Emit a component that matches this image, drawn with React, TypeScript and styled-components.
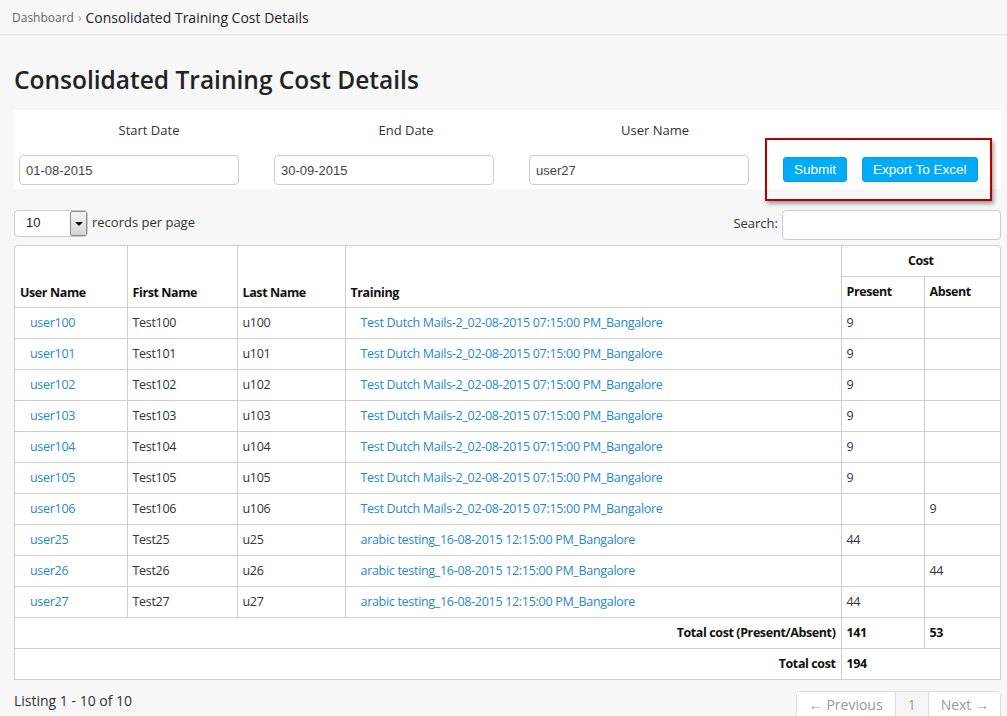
import React from "react";
import styled, { createGlobalStyle } from "styled-components";

const GlobalStyle = createGlobalStyle`
  html, body { margin: 0; padding: 0; }
  body {
    background: #f7f7f7;
    font-family: "Open Sans", "Liberation Sans", sans-serif;
    color: #333;
    font-size: 13px;
  }
  * { box-sizing: border-box; }
`;

const Crumbs = styled.div`
  height: 35px;
  display: flex;
  align-items: center;
  padding-left: 12px;
  border-bottom: 1px solid #e6e6e6;
  gap: 4px;
`;
const CrumbLink = styled.span`
  font-size: 12px;
  color: #666;
`;
const CrumbSep = styled.span`
  font-size: 12px;
  color: #999;
`;
const CrumbCurrent = styled.span`
  font-size: 14px;
  color: #222;
`;

const Main = styled.div`
  padding: 0 6px 0 14px;
`;

const Title = styled.h1`
  margin: 27px 0 12px;
  font-size: 24.5px;
  line-height: 36px;
  font-weight: 600;
  color: #222;
`;

const Panel = styled.div`
  background: #fff;
  height: 79px;
  display: flex;
  align-items: flex-end;
  padding: 0 0 4px 5px;
`;
const Field = styled.div`
  width: 255px;
  display: flex;
  flex-direction: column;
`;
const FieldLabel = styled.div<{ $shift: number }>`
  width: 220px;
  text-align: center;
  padding-left: ${(p) => p.$shift}px;
  font-size: 13px;
  line-height: 18px;
  color: #333;
  margin-bottom: 16px;
`;
const TextInput = styled.input`
  width: 220px;
  height: 30px;
  border: 1px solid #ccc;
  border-radius: 4px;
  padding: 0 6px;
  font-family: "Liberation Sans", Arial, sans-serif;
  font-size: 13px;
  color: #444;
  background: #fff;
  outline: none;
`;
const ActionCell = styled.div`
  position: relative;
  margin-left: -18px;
  display: flex;
  gap: 15px;
  padding: 0 0 3px 17px;
`;
const Highlight = styled.div`
  position: absolute;
  left: -1px;
  top: -19px;
  width: 227px;
  height: 63px;
  border: 2px solid #b50000;
  box-shadow: 2px 3px 4px rgba(0, 0, 0, 0.35);
  pointer-events: none;
`;
const Btn = styled.button`
  height: 25px;
  padding: 0 10px;
  border: 1px solid #00a0e6;
  border-radius: 3px;
  background: #02abf5;
  color: #fff;
  font-family: "Liberation Sans", Arial, sans-serif;
  font-size: 13.5px;
  line-height: 23px;
`;

const Toolbar = styled.div`
  margin-top: 21px;
  display: flex;
  justify-content: space-between;
  align-items: flex-start;
  height: 30px;
  margin-bottom: 5px;
`;
const Length = styled.div`
  display: flex;
  align-items: center;
  gap: 4px;
  font-size: 13px;
  line-height: 18px;
  color: #333;
`;
const LengthText = styled.span`
  margin-bottom: 3px;
`;
const SelectBox = styled.div`
  width: 74px;
  height: 27px;
  border: 1px solid #ccc;
  border-radius: 4px;
  background: #fff;
  display: flex;
  align-items: stretch;
  justify-content: space-between;
  font-family: "Liberation Sans", Arial, sans-serif;
  font-size: 13px;
  color: #222;
  padding-left: 11px;
  overflow: hidden;
`;
const SelectValue = styled.span`
  align-self: center;
  margin-bottom: 2px;
`;
const SelectArrow = styled.span`
  width: 17px;
  border: 1px solid #8a8a8a;
  border-radius: 2px;
  background: linear-gradient(#f4f4f4, #d4d4d4);
  display: flex;
  align-items: center;
  justify-content: center;
  &::after {
    content: "";
    border-left: 4px solid transparent;
    border-right: 4px solid transparent;
    border-top: 4px solid #111;
  }
`;
const SearchWrap = styled.label`
  display: flex;
  align-items: center;
  gap: 4px;
  font-size: 13px;
  line-height: 18px;
  color: #333;
`;
const SearchLabel = styled.span`
  margin-bottom: 4px;
`;
const SearchInput = styled.input`
  width: 219px;
  height: 30px;
  border: 1px solid #ccc;
  border-radius: 4px;
  background: #fff;
  outline: none;
`;

const TableWrap = styled.div`
  border: 1px solid #cfcfcf;
  border-bottom: none;
  border-radius: 4px 4px 0 0;
  overflow: hidden;
  background: #fff;
`;
const Table = styled.table`
  width: 100%;
  border-collapse: collapse;
  table-layout: fixed;
  font-size: 12.5px;
  tr:first-child > th { height: 30px; }
`;
const Th = styled.th<{ $center?: boolean; $bottom?: boolean }>`
  border: 1px solid #cfcfcf;
  border-top: none;
  height: 31px;
  padding: 0 5px ${(p) => (p.$bottom ? 6 : 0)}px;
  font-weight: 700;
  text-align: ${(p) => (p.$center ? "center" : "left")};
  vertical-align: ${(p) => (p.$bottom ? "bottom" : "middle")};
  color: #111;
  letter-spacing: -0.4px;
  &:first-child { border-left: none; }
  &:last-child { border-right: none; }
`;
const Td = styled.td<{ $right?: boolean; $bold?: boolean }>`
  border: 1px solid #cfcfcf;
  height: 31px;
  padding: 0 5px;
  text-align: ${(p) => (p.$right ? "right" : "left")};
  font-weight: ${(p) => (p.$bold ? 700 : 400)};
  color: ${(p) => (p.$bold ? "#111" : "#333")};
  letter-spacing: ${(p) => (p.$bold ? "-0.4px" : "-0.3px")};
  white-space: nowrap;
  &:first-child { border-left: none; }
  &:last-child { border-right: none; }
`;
const Link = styled.a`
  color: #1f88d3;
  text-decoration: none;
  padding-left: 10px;
`;

const Footer = styled.div`
  display: flex;
  justify-content: space-between;
  align-items: flex-start;
  margin-top: 11px;
`;
const Info = styled.div`
  font-size: 14px;
  color: #333;
  line-height: 20px;
`;
const Pager = styled.div`
  display: flex;
  border: 1px solid #ddd;
  border-radius: 4px;
  background: #fff;
  height: 30px;
  overflow: hidden;
`;
const PageItem = styled.span<{ $active?: boolean }>`
  display: flex;
  align-items: center;
  padding: 0 12px 2px;
  font-size: 14px;
  color: #999;
  background: ${(p) => (p.$active ? "#f5f5f5" : "#fff")};
  & + & { border-left: 1px solid #ddd; }
  &:last-child { padding-right: 11px; }
`;

type Row = { user: string; first: string; last: string; training: string; present: string; absent: string };

const dutch = "Test Dutch Mails-2_02-08-2015 07:15:00 PM_Bangalore";
const arabic = "arabic testing_16-08-2015 12:15:00 PM_Bangalore";

const rows: Row[] = [
  { user: "user100", first: "Test100", last: "u100", training: dutch, present: "9", absent: "" },
  { user: "user101", first: "Test101", last: "u101", training: dutch, present: "9", absent: "" },
  { user: "user102", first: "Test102", last: "u102", training: dutch, present: "9", absent: "" },
  { user: "user103", first: "Test103", last: "u103", training: dutch, present: "9", absent: "" },
  { user: "user104", first: "Test104", last: "u104", training: dutch, present: "9", absent: "" },
  { user: "user105", first: "Test105", last: "u105", training: dutch, present: "9", absent: "" },
  { user: "user106", first: "Test106", last: "u106", training: dutch, present: "", absent: "9" },
  { user: "user25", first: "Test25", last: "u25", training: arabic, present: "44", absent: "" },
  { user: "user26", first: "Test26", last: "u26", training: arabic, present: "", absent: "44" },
  { user: "user27", first: "Test27", last: "u27", training: arabic, present: "44", absent: "" },
];

export default function App() {
  return (
    <>
      <GlobalStyle />
      <Crumbs>
        <CrumbLink>Dashboard</CrumbLink>
        <CrumbSep>›</CrumbSep>
        <CrumbCurrent>Consolidated Training Cost Details</CrumbCurrent>
      </Crumbs>
      <Main>
        <Title>Consolidated Training Cost Details</Title>
        <Panel>
          <Field>
            <FieldLabel $shift={40}>Start Date</FieldLabel>
            <TextInput defaultValue="01-08-2015" />
          </Field>
          <Field>
            <FieldLabel $shift={44}>End Date</FieldLabel>
            <TextInput defaultValue="30-09-2015" />
          </Field>
          <Field>
            <FieldLabel $shift={32}>User Name</FieldLabel>
            <TextInput defaultValue="user27" />
          </Field>
          <ActionCell>
            <Highlight />
            <Btn>Submit</Btn>
            <Btn>Export To Excel</Btn>
          </ActionCell>
        </Panel>
        <Toolbar>
          <Length>
            <SelectBox>
              <SelectValue>10</SelectValue>
              <SelectArrow />
            </SelectBox>
            <LengthText>records per page</LengthText>
          </Length>
          <SearchWrap>
            <SearchLabel>Search:</SearchLabel>
            <SearchInput />
          </SearchWrap>
        </Toolbar>
        <TableWrap>
          <Table>
            <colgroup>
              <col style={{ width: 112 }} />
              <col style={{ width: 110 }} />
              <col style={{ width: 108 }} />
              <col style={{ width: 496 }} />
              <col style={{ width: 83 }} />
              <col />
            </colgroup>
            <thead>
              <tr>
                <Th rowSpan={2} $bottom>User Name</Th>
                <Th rowSpan={2} $bottom>First Name</Th>
                <Th rowSpan={2} $bottom>Last Name</Th>
                <Th rowSpan={2} $bottom>Training</Th>
                <Th colSpan={2} $center>Cost</Th>
              </tr>
              <tr>
                <Th>Present</Th>
                <Th>Absent</Th>
              </tr>
            </thead>
            <tbody>
              {rows.map((r) => (
                <tr key={r.user}>
                  <Td><Link href="#">{r.user}</Link></Td>
                  <Td>{r.first}</Td>
                  <Td>{r.last}</Td>
                  <Td><Link href="#">{r.training}</Link></Td>
                  <Td>{r.present}</Td>
                  <Td>{r.absent}</Td>
                </tr>
              ))}
              <tr>
                <Td colSpan={4} $right $bold>Total cost (Present/Absent)</Td>
                <Td $bold>141</Td>
                <Td $bold>53</Td>
              </tr>
              <tr>
                <Td colSpan={4} $right $bold>Total cost</Td>
                <Td colSpan={2} $bold>194</Td>
              </tr>
            </tbody>
          </Table>
        </TableWrap>
        <Footer>
          <Info>Listing 1 - 10 of 10</Info>
          <Pager>
            <PageItem>← Previous</PageItem>
            <PageItem $active>1</PageItem>
            <PageItem>Next →</PageItem>
          </Pager>
        </Footer>
      </Main>
    </>
  );
}
